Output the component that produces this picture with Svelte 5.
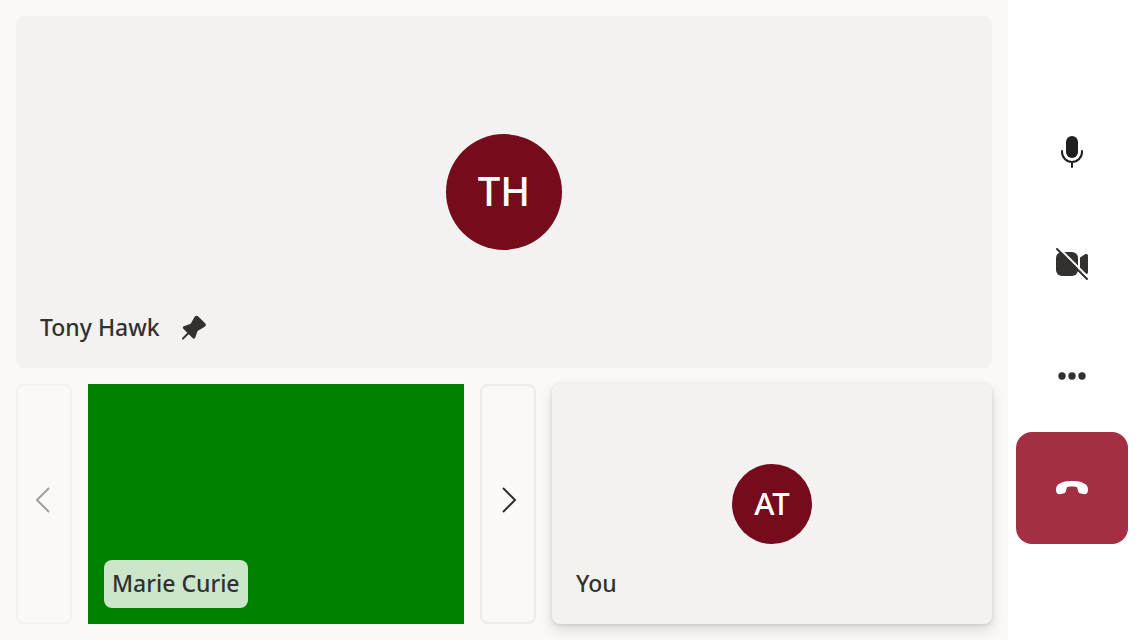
<script>
  let micOn = $state(true);
</script>

<div class="call">
  <main class="stage">
    <section class="tile featured" aria-label="Tony Hawk">
      <div class="avatar large">TH</div>
      <div class="name">
        <span>Tony Hawk</span>
        <svg class="pin" viewBox="0 0 24 24" aria-hidden="true">
          <path d="M12.7 1.7C13.6 .5 15.2 .3 16.3 1.4L23.1 8.2C24.3 9.4 24 11 22.7 11.8L16 15.7C15.7 15.9 15.5 16.1 15.4 16.4L13.2 22.7C12.8 23.8 11.6 24 10.8 23.2L1.3 13.7C.5 12.9 .7 11.7 1.8 11.3L8.1 9.1C8.4 9 8.6 8.8 8.8 8.5Z" />
          <path class="needle" d="M7 17.5L.9 23.6" />
        </svg>
      </div>
    </section>

    <div class="strip">
      <button class="pager" disabled aria-label="Previous participants">
        <svg viewBox="0 0 28 28" aria-hidden="true"><path d="M19 2L7 14L19 26" /></svg>
      </button>
      <section class="tile video" aria-label="Marie Curie">
        <div class="name tag">Marie Curie</div>
      </section>
      <button class="pager" aria-label="Next participants">
        <svg viewBox="0 0 28 28" aria-hidden="true"><path d="M9 2L21 14L9 26" /></svg>
      </button>
      <section class="tile self" aria-label="You">
        <div class="avatar">AT</div>
        <div class="name">You</div>
      </section>
    </div>
  </main>

  <nav class="controls" aria-label="Call controls">
    <button class="control" aria-label="Microphone" aria-pressed={micOn} onclick={() => (micOn = !micOn)}>
      <svg class="mic" viewBox="0 0 40 40" aria-hidden="true">
        <rect x="14" y="4" width="12" height="22" rx="6" />
        <path class="line" d="M10 19V20A10 10 0 0 0 30 20V19M20 30V35" />
      </svg>
    </button>
    <button class="control" aria-label="Turn camera on">
      <svg viewBox="0 0 40 40" aria-hidden="true">
        <rect x="4" y="8" width="22" height="24" rx="6" />
        <path d="M28 13.5L33 10.3C34.6 9.4 36 10.2 36 11.8V28.2C36 29.8 34.6 30.6 33 29.7L28 26.5Z" />
        <path class="gap" d="M5.5 2.5L37.5 34.5" />
        <path class="line" d="M5 5L35 35" />
      </svg>
    </button>
    <button class="control" aria-label="More options">
      <svg viewBox="0 0 40 40" aria-hidden="true">
        <circle cx="10" cy="20" r="3.7" />
        <circle cx="20" cy="20" r="3.7" />
        <circle cx="30" cy="20" r="3.7" />
      </svg>
    </button>
    <button class="control leave" aria-label="Leave call">
      <svg viewBox="0 0 40 40" aria-hidden="true">
        <path d="M20 13C27 13 32 14.5 34.5 17.3C35.9 18.9 36.2 20.9 35.9 22.9C35.5 25.3 33.9 26.5 31.6 26.1L28.8 25.6C27.2 25.3 26.4 24.4 26 22.8L25.3 19.9C25.2 19.4 24.9 19.1 24.4 19C23 18.7 21.4 18.6 20 18.6C18.6 18.6 17 18.7 15.6 19C15.1 19.1 14.8 19.4 14.7 19.9L14 22.8C13.6 24.4 12.8 25.3 11.2 25.6L8.4 26.1C6.1 26.5 4.5 25.3 4.1 22.9C3.8 20.9 4.1 18.9 5.5 17.3C8 14.5 13 13 20 13Z" />
      </svg>
    </button>
  </nav>
</div>

<style>
  .call {
    display: flex;
    min-height: 100vh;
    background: #fff;
    color: #323130;
    font-family: "Segoe UI", "Noto Sans", "Open Sans", sans-serif;
    font-size: 23px;
    font-weight: 500;
    line-height: 30px;
  }

  .stage {
    flex: 1;
    min-width: 0;
    display: flex;
    flex-direction: column;
    gap: 16px;
    padding: 16px;
    background: #faf9f8;
  }

  .tile {
    display: grid;
    min-width: 0;
    border-radius: 8px;
    background: #f3f2f1;
  }

  .tile > * {
    grid-area: 1 / 1;
  }

  .featured {
    flex: 1;
  }

  .strip {
    display: grid;
    grid-template-columns: 56px 47fr 56px 55fr;
    grid-template-rows: 240px;
    gap: 16px;
  }

  .video {
    border-radius: 0;
    background: #008000;
  }

  .self {
    box-shadow: 0 6px 14px rgba(0, 0, 0, 0.13), 0 1px 4px rgba(0, 0, 0, 0.11);
  }

  .avatar {
    place-self: center;
    display: grid;
    place-items: center;
    width: 80px;
    height: 80px;
    padding-bottom: 2px;
    box-sizing: border-box;
    border-radius: 50%;
    background: #750b1c;
    color: #fff;
    font-size: 31px;
    line-height: 40px;
  }

  .avatar.large {
    width: 116px;
    height: 116px;
    font-size: 40px;
  }

  .name {
    place-self: end start;
    display: flex;
    align-items: center;
    gap: 22px;
    margin: 16px;
    padding: 8px 8px 10px;
    border-radius: 8px;
    white-space: nowrap;
  }

  .tag {
    background: rgba(255, 255, 255, 0.8);
  }

  .pin {
    width: 24px;
    height: 24px;
    overflow: visible;
  }

  .needle {
    stroke: currentColor;
    stroke-width: 2;
    stroke-linecap: round;
  }

  svg {
    display: block;
    fill: currentColor;
  }

  button {
    display: grid;
    place-items: center;
    padding: 0;
    border: 0;
    background: transparent;
    color: inherit;
    cursor: pointer;
  }

  .pager {
    padding-bottom: 8px;
    border: 2px solid #edebe9;
    border-radius: 8px;
  }

  .pager:disabled {
    border-color: #f3f2f1;
    color: #a19f9d;
    cursor: default;
  }

  .pager svg {
    width: 28px;
    height: 28px;
    fill: none;
    stroke: currentColor;
    stroke-width: 2;
  }

  .controls {
    display: flex;
    flex-direction: column;
    justify-content: center;
    padding: 8px;
  }

  .control {
    width: 112px;
    height: 112px;
    border-radius: 16px;
  }

  .control svg {
    width: 40px;
    height: 40px;
  }

  .mic {
    color: #201f1e;
  }

  .line {
    fill: none;
    stroke: currentColor;
    stroke-width: 2;
    stroke-linecap: round;
  }

  .gap {
    fill: none;
    stroke: #fff;
    stroke-width: 2;
  }

  .leave {
    background: #a42e43;
    color: #fff;
  }
</style>
